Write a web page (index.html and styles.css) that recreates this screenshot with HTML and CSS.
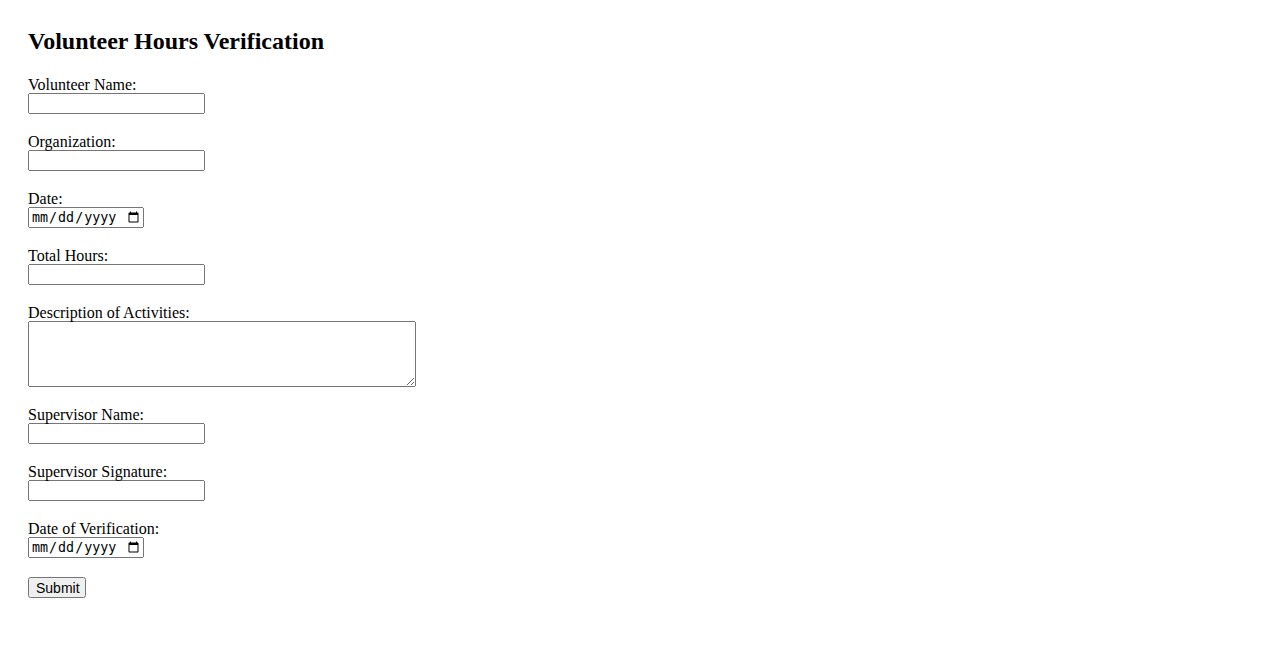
FILE: index.html
```html
<!DOCTYPE html>
<html lang="en">
<head>
  <meta charset="UTF-8" />
  <meta name="viewport" content="width=device-width, initial-scale=1" />
  <title>Volunteer Hours Verification</title>
  <link rel="stylesheet" href="styles.css">
</head>
<body>
  <div class="container">
    <h2>Volunteer Hours Verification</h2>
    <form>
      <div class="field">
        <label for="volunteerName">Volunteer Name:</label>
        <input type="text" id="volunteerName" class="text-input">
      </div>
      <div class="field">
        <label for="organization">Organization:</label>
        <input type="text" id="organization" class="text-input">
      </div>
      <div class="field">
        <label for="date">Date:</label>
        <input type="date" id="date" class="date-input">
      </div>
      <div class="field">
        <label for="totalHours">Total Hours:</label>
        <input type="text" id="totalHours" class="text-input">
      </div>
      <div class="field">
        <label for="description">Description of Activities:</label>
        <textarea id="description" class="area-input"></textarea>
      </div>
      <div class="field">
        <label for="supervisorName">Supervisor Name:</label>
        <input type="text" id="supervisorName" class="text-input">
      </div>
      <div class="field">
        <label for="supervisorSignature">Supervisor Signature:</label>
        <input type="text" id="supervisorSignature" class="text-input">
      </div>
      <div class="field">
        <label for="verificationDate">Date of Verification:</label>
        <input type="date" id="verificationDate" class="date-input">
      </div>
      <button type="submit" class="submit">Submit</button>
    </form>
  </div>
</body>
</html>
```
FILE: styles.css
```css
body {
  font-family: "Liberation Serif", "Times New Roman", serif;
  font-size: 16px;
  margin: 8px;
  color: #000;
  background: #fff;
}
.container {
  padding: 20px;
}
h2 {
  font-size: 24px;
  margin: 0 0 20px;
}
.field {
  margin-bottom: 18px;
}
.field label {
  display: block;
  height: 18px;
  line-height: 20px;
}
.text-input, .date-input, .area-input {
  display: block;
  box-sizing: border-box;
  margin: 0;
}
.text-input {
  width: 177px;
  height: 21px;
}
.date-input {
  width: 116px;
  height: 21px;
}
.area-input {
  width: 388px;
  height: 66px;
}
.submit {
  font-family: "Liberation Sans", Arial, sans-serif;
  font-size: 14px;
  box-sizing: border-box;
  width: 58px;
  height: 21px;
  margin: 1px 0 0;
  padding: 1px 6px;
}
```
